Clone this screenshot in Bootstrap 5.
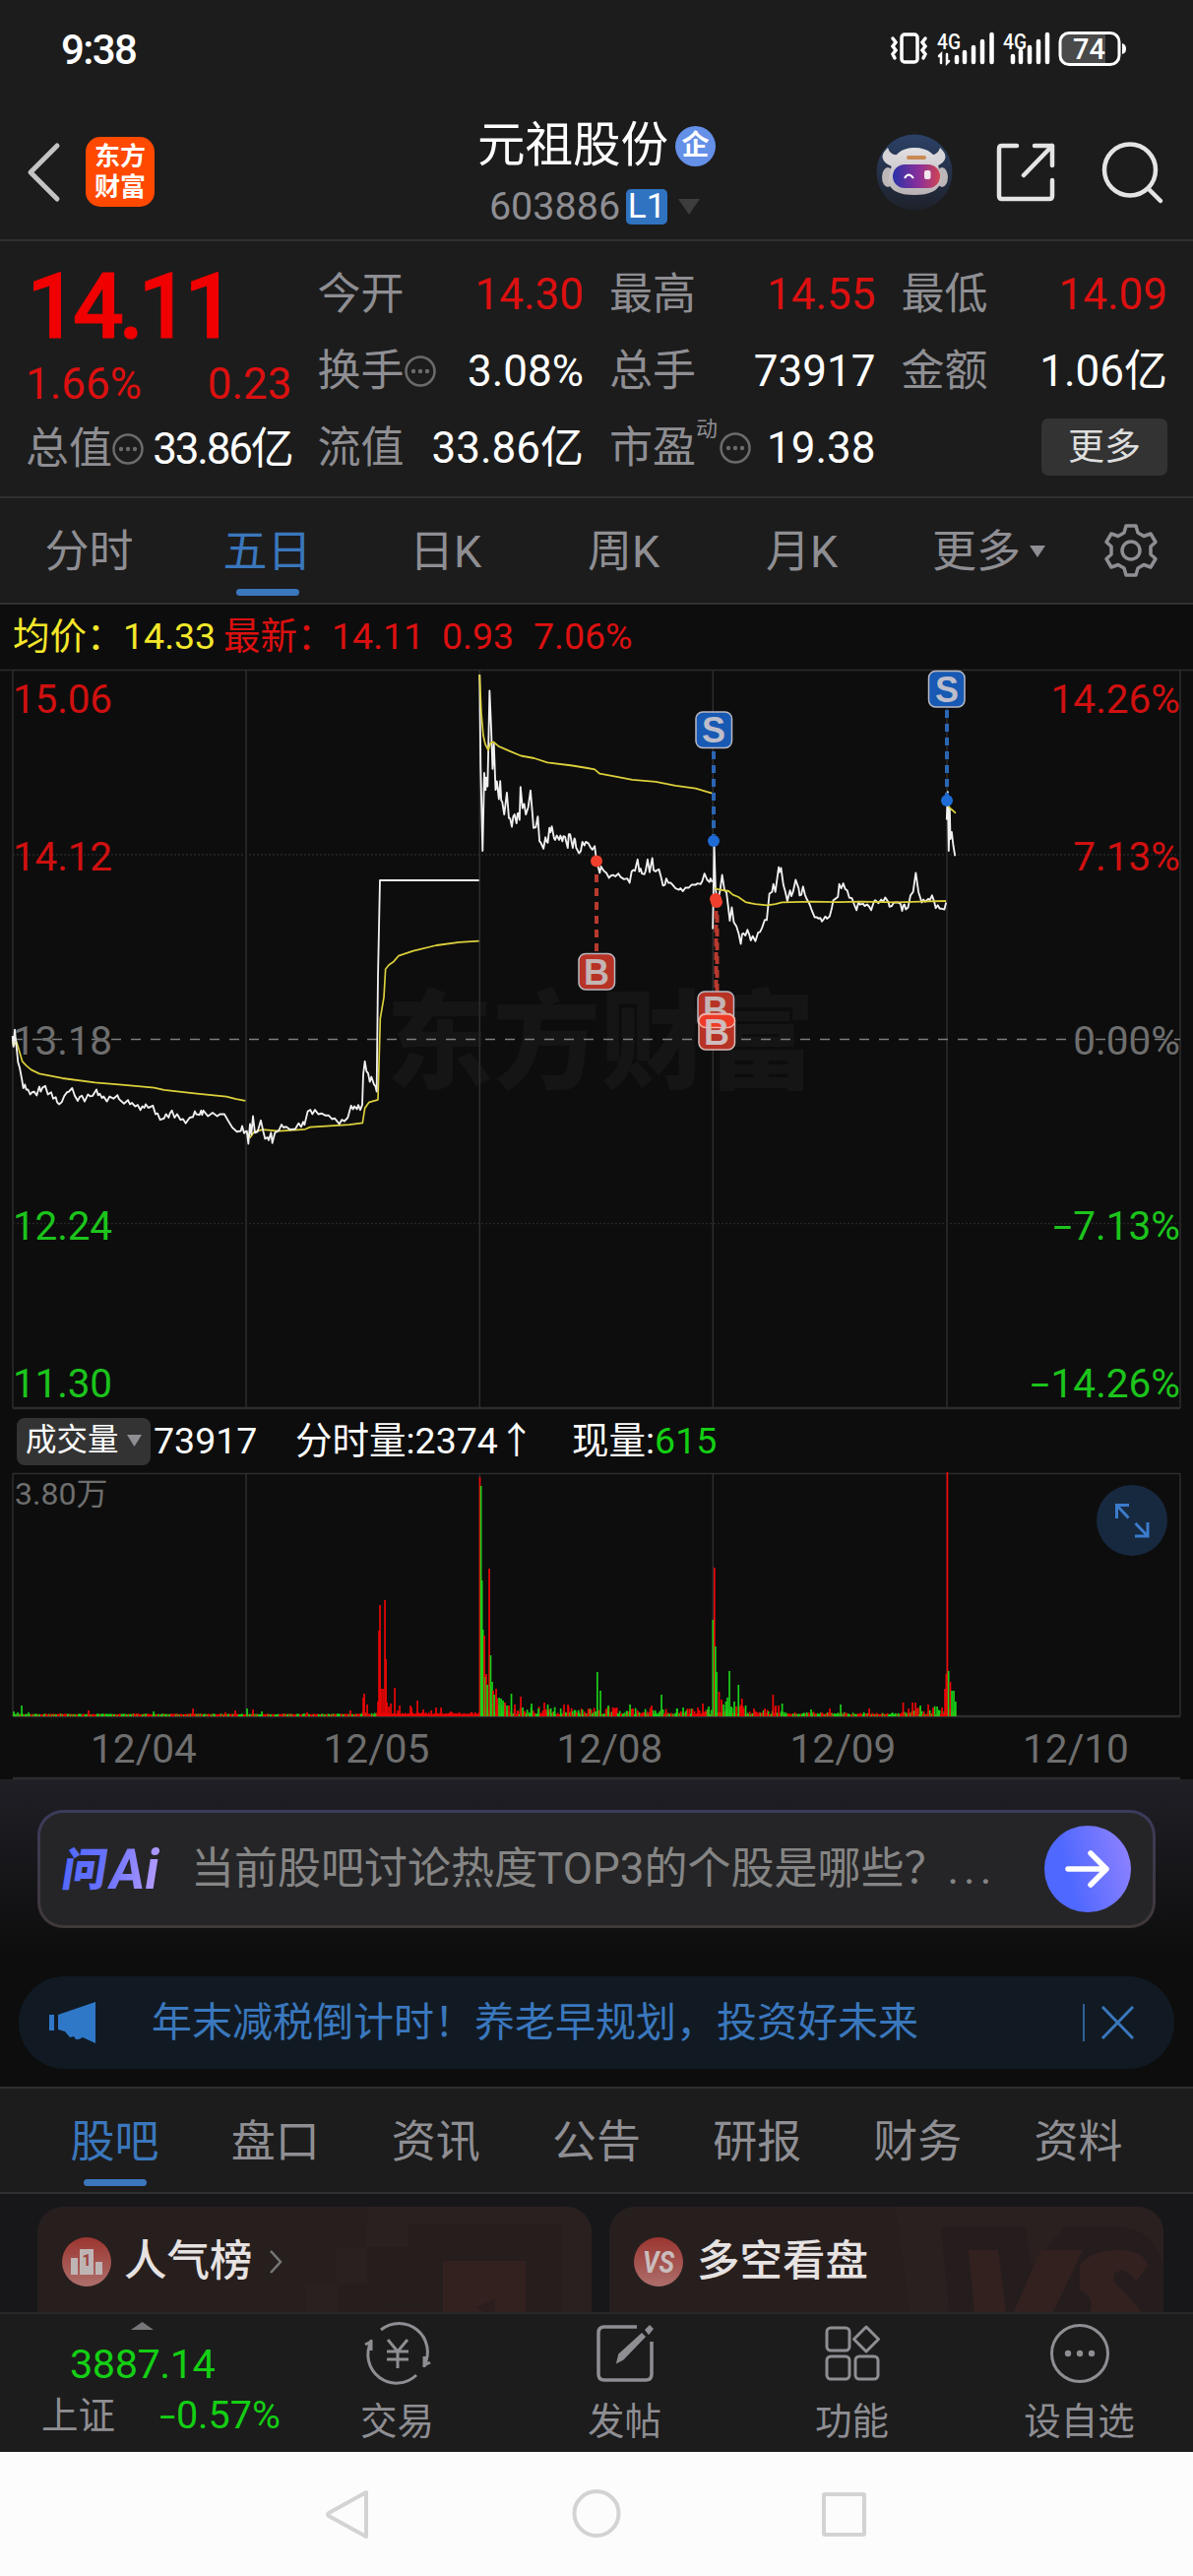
<!DOCTYPE html>
<html lang="zh-CN">
<head>
    <meta charset="UTF-8">
    <meta name="viewport" content="width=device-width, initial-scale=1">
    <title>元祖股份 603886</title>
    <!-- Bootstrap CDN -->
    <link href="https://cdn.jsdelivr.net/npm/bootstrap@5.3.0/dist/css/bootstrap.min.css" rel="stylesheet">
    <style>
        body {
            width: 1212px;
            background: #0d0d0d;
            color: #fff;
            font-family: Roboto, "Noto Sans CJK SC", sans-serif;
            line-height: 1;
            overflow-x: hidden;
        }
        svg { display: block; flex: none; overflow: visible; }
        .panel { background: #1c1c1c; }
        .line-b { border-bottom: 2px solid #303032; }
        .up { color: #dc1010; }
        .down { color: #14cf14; }
        .dim { color: #8e8e93; }
        .blue { color: #3a77bd; }

        .statusbar { height: 98px; padding: 30px 67px 0 62px; font-size: 42px; font-weight: 500; }
        .statusbar .clock { letter-spacing: -1.6px; }
        .titlebar { height: 147px; }
        .side { width: 380px; height: 153px; }
        .logo { width: 70px; height: 71px; border-radius: 15px; background: #ff4900; font-size: 26px; line-height: 31px; font-weight: 700; margin-left: 24px; }
        .stock-name { font-size: 48.5px; line-height: 62px; }
        .ent { width: 41px; height: 41px; background: #6490e8; font-size: 28px; font-weight: 700; margin-left: 7px; }
        .stock-code { font-size: 39.5px; line-height: 62px; }
        .level { width: 42px; height: 36px; border-radius: 5px; background: #2f73c1; font-size: 35px; margin-left: 6px; color: #fff; }

        .quote { height: 261px; padding: 15px 26px 0 26px; display: grid; grid-template-columns: repeat(4, 270.5px); column-gap: 26px; font-size: 44px; }
        .quote .cell { height: 78px; }
        .price { height: 103px; font-size: 92px; font-weight: 500; letter-spacing: -5.6px; color: #f00000; padding-left: 1px; -webkit-text-stroke: 1px #f00000; }
        .change { height: 54px; }
        .tight { letter-spacing: -2.2px; }
        .more-btn { width: 128px; height: 58px; border-radius: 7px; background: #333; color: #dedede; font-size: 37px; margin-bottom: 2px; }
        .sup { font-size: 22px; align-self: flex-start; margin-top: 9px; }

        .tabs { height: 108px; font-size: 45px; }
        .tabs .item { position: relative; width: 181px; height: 108px; }
        .tabs2 { height: 109px; padding: 0 35px; border-top: 2px solid #303032; }
        .tabs2 .item { width: 163.2px; }
        .item.on { color: #3a77bd; }
        .item.on::after { content: ""; position: absolute; left: 50%; bottom: 9px; width: 64px; height: 7px; margin-left: -32px; border-radius: 4px; background: #3a77bd; }

        .avg { height: 66px; font-size: 37.5px; padding-left: 13px; }
        .avg span { display: inline-block; white-space: nowrap; }
        .yellow { color: #f4e72a; }
        .volinfo { height: 64px; font-size: 37.5px; padding-left: 17px; }
        .volbtn { width: 136px; height: 48px; background: #333; border-radius: 8px; font-size: 31.5px; padding-left: 9px; padding-bottom: 2px; }
        .axis { font-size: 40.5px; }

        .ai-area { height: 182px; padding: 31px 38px 0; background: linear-gradient(#201f26, #0d0d0d); }
        .ai-box { height: 120px; border: 3px solid transparent; border-radius: 26px; background: linear-gradient(#252527, #252527) padding-box, linear-gradient(#3c3b5c, #403839) border-box; padding: 0 22px 0 21px; }
        .ai-text { font-size: 44px; color: #858585; width: 815px; margin-left: 29px; }
        .ai-go { width: 88px; height: 88px; background: linear-gradient(75deg, #4f68ff 30%, #9384ff); }
        .notice { height: 94px; margin: 18px 19px; border-radius: 47px; background: #111a23; font-size: 41px; padding: 0 40px 0 31px; }

        .cards { height: 120px; background: #17171a; padding: 13px 30px 0 38px; gap: 18px; overflow: hidden; }
        .topic { position: relative; width: 563px; height: 107px; border-radius: 26px 26px 0 0; background: #271f1e; padding-left: 25px; font-size: 43.5px; font-weight: 500; color: #e6e2e2; overflow: hidden; }
        .topic .art { position: absolute; right: 0; top: 0; }
        .topic .front { position: relative; height: 112px; }

        .bottombar { height: 142px; border-top: 2px solid #28282a; font-size: 37.5px; }
        .index { width: 288px; padding-left: 42px; }
        .minus { display: inline-block; transform: scaleX(1.5); transform-origin: left; margin-right: 6px; }
        .tool { width: 231px; padding-top: 6px; }
        .tool span { margin-top: 17px; }
        .sysnav { height: 126px; background: #fcfcfc; }
    </style>
</head>
<body>

<!-- Estado -->
<div class="panel statusbar d-flex align-items-start justify-content-between">
    <div class="clock">9:38</div>
    <svg width="240" height="40" viewBox="906 30 240 40">
        <g fill="none" stroke="#fff" stroke-width="3.5" stroke-linecap="round">
            <rect x="917" y="35" width="16" height="28" rx="3"/>
            <path d="M908 39l3 4-3 4 3 4-3 4 2 4M941 39l-3 4 3 4-3 4 3 4-2 4"/>
            <path d="M973 63v-5M981 63v-10M990 63v-15M999 63v-21M1008.500 63v-28M1030 63v-6M1038 63v-11M1047 63v-15M1056 63v-21M1065 63v-28" stroke-width="4.500"/>
            <path d="M957 64v-9l-2 2M963 55v9l2-2" stroke-width="2.500"/>
        </g>
        <g fill="#fff" font-size="22" font-weight="500">
            <text x="953" y="50" textLength="24" lengthAdjust="spacingAndGlyphs">4G</text>
            <text x="1020" y="50" textLength="24" lengthAdjust="spacingAndGlyphs">4G</text>
        </g>
        <path d="M1088 34h36v31h-36q-9 0-9-9v-13q0-9 9-9z" fill="#4a4a4a"/>
        <rect x="1078" y="33.500" width="60" height="32" rx="9" fill="none" stroke="#fff" stroke-width="3"/>
        <path d="M1141 44q4 1 4 5.500t-4 5.500z" fill="#fff"/>
        <text x="1107.500" y="60" fill="#fff" font-size="29" font-weight="500" text-anchor="middle">74</text>
    </svg>
</div>

<!-- Título -->
<div class="panel line-b titlebar d-flex justify-content-between">
    <div class="side d-flex align-items-center ps-4">
        <svg width="36" height="64" viewBox="0 0 36 64" style="margin-left: 3px"><path d="M31 5L4 32l27 27" fill="none" stroke="#c4c4c4" stroke-width="5" stroke-linecap="round" stroke-linejoin="round"/></svg>
        <div class="logo d-flex flex-column align-items-center justify-content-center"><span>东方</span><span>财富</span></div>
    </div>
    <div class="d-flex flex-column align-items-center" style="padding-top: 19px">
        <div class="stock-name d-flex align-items-center">元祖股份<span class="ent rounded-circle d-flex align-items-center justify-content-center">企</span></div>
        <div class="stock-code dim d-flex align-items-center" style="margin-right: 4px">603886<span class="level d-flex align-items-center justify-content-center">L1</span>
            <svg width="22" height="16" viewBox="0 0 22 16" style="margin-left: 11px"><path d="M0 0h22L11 16z" fill="#3d3d3d"/></svg>
        </div>
    </div>
    <div class="side d-flex align-items-center justify-content-end" style="padding-right: 31px">
        <svg width="78" height="78" viewBox="0 0 78 78">
            <defs>
                <linearGradient id="sky" x1="0" y1="0" x2="0" y2="1"><stop offset="0" stop-color="#2c4167"/><stop offset="1" stop-color="#1d212a"/></linearGradient>
                <linearGradient id="visor"><stop offset="0" stop-color="#2a32a8"/><stop offset=".55" stop-color="#8a2f9b"/><stop offset="1" stop-color="#d04552"/></linearGradient>
                <linearGradient id="helm" x1="0" y1="0" x2="0" y2="1"><stop offset="0" stop-color="#e2e0e4"/><stop offset="1" stop-color="#b9b2b4"/></linearGradient>
            </defs>
            <circle cx="39" cy="39" r="38.500" fill="url(#sky)"/>
            <path d="M12 14q-11 10 0 17l6 3 8-14q-11 4-14-6zM65 14q11 10 0 17l-6 3-8-14q11 4 14-6z" fill="#d6d4d8"/>
            <ellipse cx="12" cy="44" rx="6" ry="10" fill="#bdb7ba"/><ellipse cx="67" cy="44" rx="6" ry="10" fill="#bdb7ba"/>
            <path d="M15 36q3-22 24-22 22 0 25 22l2 12q-3 14-27 14T12 48z" fill="url(#helm)"/>
            <rect x="31" y="22" width="20" height="4" rx="2" fill="#c98a54"/>
            <rect x="17" y="31" width="48" height="24" rx="12" fill="url(#visor)"/>
            <path d="M29 45q4-7 9 0" fill="none" stroke="#fff" stroke-width="2"/>
            <rect x="49" y="37" width="6.500" height="9" rx="2" fill="#f3e6ef"/>
        </svg>
        <svg width="60" height="60" viewBox="0 0 60 60" style="margin-left: 44px" fill="none" stroke="#e4e4e4" stroke-width="4.500" stroke-linecap="round" stroke-linejoin="round">
            <path d="M21 3H6q-3 0-3 3v48q0 3 3 3h48q3 0 3-3V38M39 3h18v20M57 3L28 33"/>
        </svg>
        <svg width="62" height="62" viewBox="0 0 62 62" style="margin-left: 47px" fill="none" stroke="#e4e4e4" stroke-width="4.500" stroke-linecap="round">
            <circle cx="29" cy="28.500" r="26"/><path d="M48 48l12 12"/>
        </svg>
    </div>
</div>

<!-- Cotización -->
<div class="panel line-b quote">
    <div>
        <div class="price d-flex align-items-center">14.11</div>
        <div class="change up d-flex align-items-center justify-content-between"><span>1.66%</span><span>0.23</span></div>
        <div class="cell d-flex align-items-center"><span class="dim">总值</span>
            <svg width="32" height="32" viewBox="0 0 32 32" class="ms-0"><circle cx="16" cy="16" r="14.500" fill="none" stroke="#6b6b6e" stroke-width="2.500"/><g fill="#6b6b6e"><circle cx="9" cy="16" r="2.200"/><circle cx="16" cy="16" r="2.200"/><circle cx="23" cy="16" r="2.200"/></g></svg>
            <span class="ms-auto tight">33.86亿</span></div>
    </div>
    <div>
        <div class="cell d-flex align-items-center justify-content-between"><span class="dim">今开</span><span class="up">14.30</span></div>
        <div class="cell d-flex align-items-center"><span class="dim">换手</span>
            <svg width="32" height="32" viewBox="0 0 32 32"><circle cx="16" cy="16" r="14.500" fill="none" stroke="#6b6b6e" stroke-width="2.500"/><g fill="#6b6b6e"><circle cx="9" cy="16" r="2.200"/><circle cx="16" cy="16" r="2.200"/><circle cx="23" cy="16" r="2.200"/></g></svg>
            <span class="ms-auto">3.08%</span></div>
        <div class="cell d-flex align-items-center justify-content-between"><span class="dim">流值</span><span>33.86亿</span></div>
    </div>
    <div>
        <div class="cell d-flex align-items-center justify-content-between"><span class="dim">最高</span><span class="up">14.55</span></div>
        <div class="cell d-flex align-items-center justify-content-between"><span class="dim">总手</span><span>73917</span></div>
        <div class="cell d-flex align-items-center"><span class="dim">市盈</span><span class="sup dim">动</span>
            <svg width="32" height="32" viewBox="0 0 32 32" style="margin-left: 2px"><circle cx="16" cy="16" r="14.500" fill="none" stroke="#6b6b6e" stroke-width="2.500"/><g fill="#6b6b6e"><circle cx="9" cy="16" r="2.200"/><circle cx="16" cy="16" r="2.200"/><circle cx="23" cy="16" r="2.200"/></g></svg>
            <span class="ms-auto">19.38</span></div>
    </div>
    <div>
        <div class="cell d-flex align-items-center justify-content-between"><span class="dim">最低</span><span class="up">14.09</span></div>
        <div class="cell d-flex align-items-center justify-content-between"><span class="dim">金额</span><span>1.06亿</span></div>
        <div class="cell d-flex align-items-center justify-content-end"><div class="more-btn d-flex align-items-center justify-content-center">更多</div></div>
    </div>
</div>

<!-- Periodos -->
<div class="panel line-b tabs dim d-flex">
    <div class="item d-flex align-items-center justify-content-center">分时</div>
    <div class="item on d-flex align-items-center justify-content-center">五日</div>
    <div class="item d-flex align-items-center justify-content-center">日K</div>
    <div class="item d-flex align-items-center justify-content-center">周K</div>
    <div class="item d-flex align-items-center justify-content-center">月K</div>
    <div class="item d-flex align-items-center justify-content-center" style="padding-left: 18px">更多
        <svg width="16" height="12" viewBox="0 0 16 12" style="margin-left: 9px"><path d="M0 0h16L8 12z" fill="#8e8e93"/></svg>
    </div>
    <div class="d-flex align-items-center" style="padding-left: 35px">
        <svg width="56" height="56" viewBox="-28 -28 56 56" fill="none" stroke="#8e8e93" stroke-width="3.500" stroke-linejoin="round">
            <path d="M-5 -25H5L7 -18L13 -14.500L20 -17L25 -8.500L20 -4V4L25 8.500L20 17L13 14.500L7 18L5 25H-5L-7 18L-13 14.500L-20 17L-25 8.500L-20 4V-4L-25 -8.500L-20 -17L-13 -14.500L-7 -18Z"/>
            <circle r="9"/>
        </svg>
    </div>
</div>

<!-- Media y último -->
<div class="avg up d-flex align-items-center">
    <span class="yellow" style="width: 112px">均价：</span><span class="yellow" style="width: 102px">14.33</span>
    <span style="width: 110px">最新：</span><span style="width: 112px">14.11</span><span style="width: 93px">0.93</span><span>7.06%</span>
</div>

<!-- Gráfico de precio -->
<svg width="1212" height="752" viewBox="0 680 1212 752" class="axis">
    <text x="392" y="1097" font-size="109" font-weight="900" fill="#151515" textLength="436" lengthAdjust="spacingAndGlyphs">东方财富</text>
    <g stroke="#2d2d2e" stroke-width="1.500" fill="none">
        <path d="M0 680.500H1212M13 680V1430M250 680V1430M487.300 680V1430M724.300 680V1430M962 680V1430M1199 680V1430"/>
        <path d="M13 868H1199M13 1242.500H1199" stroke-dasharray="2 2" stroke="#262626"/>
        <path d="M13 1430H1199" stroke-width="2.500"/>
    </g>
    <path d="M13 1055.500H1199" stroke="#7d7d7d" stroke-width="1.600" stroke-dasharray="10 10"/>
    <g fill="#d01010">
        <text x="13" y="724" textLength="101">15.06</text><text x="13" y="884" textLength="101">14.12</text>
        <text x="1199" y="724" text-anchor="end">14.26%</text><text x="1199" y="884" text-anchor="end">7.13%</text>
    </g>
    <g fill="#6e6e6e">
        <text x="13" y="1071" textLength="101">13.18</text><text x="1199" y="1071" text-anchor="end">0.00%</text>
    </g>
    <g fill="#1cc41c">
        <text x="13" y="1259" textLength="101">12.24</text><text x="13" y="1419" textLength="101">11.30</text>
        <text x="1070" y="1259" textLength="19" lengthAdjust="spacingAndGlyphs">-</text><text x="1199" y="1259" text-anchor="end">7.13%</text>
        <text x="1047" y="1419" textLength="19" lengthAdjust="spacingAndGlyphs">-</text><text x="1199" y="1419" text-anchor="end">14.26%</text>
    </g>
    <!-- días 1 y 2 -->
    <g transform="translate(0 670) scale(.33333 .35714)" fill="none" stroke-linejoin="round">
        <g stroke="#dcd03c" stroke-width="5">
            <polyline points="38,1080 41,1098 50,1085 58,1110 68,1142 80,1154 95,1166 120,1177 190,1190 290,1202 380,1209 470,1217 500,1223 600,1234 690,1242 720,1249 748,1254"/>
            <polyline points="752,1345 758,1352 763,1358 775,1342 800,1336 850,1340 930,1335 945,1329 1065,1322 1105,1317 1112,1275 1125,1258 1152,1251 1159,1020 1170,960 1175,880 1185,868 1200,858 1215,842 1260,828 1330,812 1400,803 1460,800"/>
        </g>
        <g stroke="#f0f0f0" stroke-width="5.500">
            <polyline points="38,1070 41,1100 45,1052 50,1100 55,1145 60,1160 67,1195 71,1218 76,1208 80,1222 85,1222 92,1236 98,1230 104,1228 112,1239 117,1222 120,1214 124,1228 130,1216 138,1212 146,1236 156,1230 162,1248 170,1244 174,1258 180,1264 188,1258 196,1240 204,1230 210,1228 220,1218 228,1240 237,1254 244,1242 250,1240 258,1256 268,1236 275,1241 282,1240 294,1222 299,1238 304,1234 311,1246 316,1242 326,1256 334,1242 346,1248 358,1238 362,1248 368,1254 378,1262 390,1252 396,1264 402,1260 412,1270 420,1266 428,1280 434,1270 440,1274 444,1264 452,1274 466,1268 474,1292 480,1290 488,1308 500,1304 506,1292 514,1302 518,1290 524,1282 532,1302 540,1292 550,1308 558,1306 566,1318 578,1302 588,1300 594,1284 598,1292 608,1294 613,1282 616,1294 620,1282 634,1298 648,1288 662,1298 670,1292 684,1292 696,1312 708,1330 722,1342 734,1340 738,1326 744,1346 750,1340"/>
            <polyline points="752,1338 757,1376 762,1320 766,1350 771,1298 777,1345 785,1342 795,1310 802,1340 808,1362 815,1358 819,1366 826,1345 830,1374 838,1345 850,1338 858,1322 864,1330 872,1328 884,1336 900,1334 910,1318 918,1328 924,1314 928,1322 938,1284 946,1280 952,1292 960,1280 970,1292 980,1290 992,1296 1002,1296 1012,1306 1020,1304 1034,1320 1042,1308 1050,1312 1060,1302 1070,1268 1076,1278 1080,1270 1088,1278 1092,1266 1098,1280 1104,1266 1107,1180 1112,1142 1117,1170 1122,1176 1127,1200 1132,1186 1140,1208 1144,1212 1148,1228 1152,900 1158,627 1460,627"/>
        </g>
    </g>
    <!-- días 3, 4 y 5 -->
    <g transform="translate(470 670) scale(.33801 .35714)" fill="none" stroke-linejoin="round">
        <g stroke="#f0f0f0" stroke-width="5.500">
            <polyline points="51,42 54,300 60,543 65,322 69,370 71,335 75,360 81,88 86,200 90,310 94,240 99,370 103,346 109,396 113,345 116,400 119,404 125,440 133,378 139,450 143,452 148,475 152,446 156,440 162,465 165,438 168,436 171,455 174,362 180,422 185,410 190,440 197,420 204,372 210,440 213,478 220,476 226,446 231,516 235,520 243,537 249,505 252,516 256,520 261,478 264,490 268,474 275,508 278,512 283,500 290,512 294,500 300,516 303,502 308,504 313,524 316,535 319,496 323,496 331,535 336,508 338,512 341,534 350,550 355,544 360,518 366,528 370,518 378,522 386,536 390,540 397,530 402,570 412,606 416,588 424,600 432,606 440,620 446,614 452,612 459,616 468,608 475,618 485,624 495,622 502,634 508,602 513,598 518,600 526,568 531,602 535,594 539,608 546,610 550,600 556,568 562,604 570,564 574,598 580,602 585,598 590,596 597,620 602,642 608,640 612,622 618,634 625,634 633,642 640,650 650,654 655,650 662,658 670,648 680,648 688,640 700,640 706,636 715,638 720,630 727,608 735,626 742,632 745,622 750,632"/>
            <polyline points="752,766 754,660 756,522 760,650 766,690 774,655 780,612 787,655 793,662 798,700 803,742 809,704 815,746 823,758 830,780 836,808 840,780 844,778 850,784 856,768 861,780 866,798 872,786 880,800 888,776 894,774 900,762 908,740 914,740 922,665 930,660 934,638 940,660 950,590 952,604 957,592 964,640 970,660 976,686 984,656 988,672 993,660 1001,626 1010,650 1013,670 1018,668 1023,645 1029,668 1034,680 1040,690 1044,698 1050,714 1058,732 1064,732 1070,736 1075,734 1080,744 1085,738 1090,730 1095,736 1103,730 1110,704 1114,684 1120,680 1128,674 1132,638 1138,650 1144,636 1150,652 1156,656 1162,676 1170,678 1177,696 1184,712 1190,688 1194,696 1204,694 1208,700 1216,696 1222,702 1228,712 1236,688 1240,684 1250,692 1258,682 1264,688 1270,676 1280,690 1283,702 1290,700 1296,690 1308,690 1316,694 1321,714 1325,698 1328,696 1332,710 1339,704 1346,670 1354,660 1362,606 1370,660 1380,690 1385,682 1390,688 1400,680 1404,684 1411,670 1418,690 1422,706 1428,698 1434,708 1440,708 1448,710 1453,690"/>
            <polyline points="1455,455 1458,376 1461,543 1464,425 1466,510 1470,490 1475,530 1480,558"/>
        </g>
        <g stroke="#dcd03c" stroke-width="5">
            <polyline points="51,42 56,150 62,215 68,240 77,257 84,236 93,234 108,246 142,260 175,273 215,280 255,292 330,301 375,308 397,312 412,324 460,332 510,341 580,347 640,358 700,366 750,380"/>
            <polyline points="758,648 764,652 800,658 812,668 828,674 850,689 880,695 915,698 940,695 960,690 1050,688 1130,689 1200,688 1300,690 1400,687 1453,686"/>
            <polyline points="1460,416 1467,424 1475,430 1482,436"/>
        </g>
    </g>
    <!-- marcas de compra y venta -->
    <g stroke-width="4" stroke-dasharray="8 6" fill="none">
        <path d="M725 763V848M962 721V808" stroke="#2a66b4"/>
        <path d="M606 888V967M727.500 925V1006M728.500 929V1018" stroke="#b83a2e"/>
    </g>
    <g fill="#1e6bd6"><circle cx="725" cy="854" r="6"/><circle cx="962" cy="813" r="6"/></g>
    <g fill="#f0402d"><circle cx="606" cy="874.500" r="6"/><circle cx="727" cy="913" r="6"/><circle cx="728" cy="916" r="6"/></g>
    <g stroke="#b9b9c4" stroke-width="1.500">
        <rect x="707" y="723" width="36.500" height="36.500" rx="7" fill="#1759b3"/>
        <rect x="943.500" y="681.500" width="36.500" height="36.500" rx="7" fill="#1759b3"/>
        <rect x="588" y="968.500" width="36.500" height="36.500" rx="7" fill="#b73326"/>
        <rect x="709" y="1007" width="36.500" height="36.500" rx="7" fill="#b73326"/>
    </g>
    <g font-family="Liberation Sans, sans-serif" font-size="36" font-weight="700" text-anchor="middle" fill="#bdbdcb">
        <text x="725" y="754">S</text><text x="962" y="712.500">S</text>
        <text x="606" y="1000" fill="#c4b4b4">B</text><text x="727" y="1038" fill="#c4b4b4">B</text>
        <rect x="710" y="1029.500" width="36.500" height="36.500" rx="7" fill="#b73326" stroke="#d8b9b5" stroke-width="1.500"/>
        <rect x="710" y="1030" width="36.500" height="13.500" rx="7" fill="#ee3a26" stroke="#f0b0a8" stroke-width="1.500"/>
        <text x="728" y="1061" fill="#d0bcbc">B</text>
    </g>
</svg>

<!-- Volumen -->
<div class="volinfo d-flex align-items-center">
    <div class="volbtn d-flex align-items-center">成交量<svg width="15" height="12" viewBox="0 0 15 12" style="margin-left: 8px"><path d="M0 0h15L7.500 12z" fill="#8e8e93"/></svg></div>
    <span style="width: 147px; padding-left: 3px">73917</span>
    <span style="width: 281px">分时量:2374↑</span>
    <span>现量:<span class="down">615</span></span>
</div>
<svg width="1212" height="311" viewBox="0 1496 1212 311" class="axis">
    <g stroke="#2d2d2e" stroke-width="1.500" fill="none">
        <path d="M13 1496.500H1199M13 1496V1743M250 1496V1743M487.300 1496V1743M724.300 1496V1743M962 1496V1743M1199 1496V1743"/>
        <path d="M13 1743H1199M13 1806H1199" stroke-width="2.500"/>
    </g>
    <g id="bars"></g>
    <text x="15" y="1528" font-size="32" fill="#6e6e6e">3.80万</text>
    <g fill="#6e6e6e" text-anchor="middle">
        <text x="146" y="1790">12/04</text><text x="382.500" y="1790">12/05</text><text x="619.500" y="1790">12/08</text><text x="856.500" y="1790">12/09</text><text x="1093" y="1790">12/10</text>
    </g>
    <circle cx="1150" cy="1544" r="36" fill="#17293f"/>
    <path d="M1134.500 1542V1528.500H1147M1134.500 1528.500L1146.500 1541.500M1166 1546V1560H1153M1166 1560L1153.500 1547" fill="none" stroke="#3a7ccb" stroke-width="3"/>
</svg>

<!-- Pregunta a la IA -->
<div class="ai-area">
    <div class="ai-box d-flex align-items-center">
        <svg width="103" height="60" viewBox="0 -5 103 60">
            <defs><linearGradient id="wen" gradientUnits="userSpaceOnUse" x1="0" y1="0" x2="103" y2="0"><stop offset="0" stop-color="#4f68ff"/><stop offset=".5" stop-color="#6a72ff"/><stop offset="1" stop-color="#b39bff"/></linearGradient></defs>
            <g transform="skewX(-9)" fill="url(#wen)" font-weight="900">
                <text x="6" y="42" font-size="46" textLength="45" lengthAdjust="spacingAndGlyphs">问</text>
                <text x="54" y="45" font-size="57" font-weight="700" textLength="50" lengthAdjust="spacingAndGlyphs">Ai</text>
            </g>
        </svg>
        <div class="ai-text text-nowrap">当前股吧讨论热度TOP3的个股是哪些？<span style="letter-spacing: 5px">...</span></div>
        <div class="ai-go rounded-circle d-flex align-items-center justify-content-center ms-auto">
            <svg width="46" height="40" viewBox="0 0 46 40"><path d="M3 20H42M26 4L42 20L26 36" fill="none" stroke="#fff" stroke-width="5.500" stroke-linecap="round" stroke-linejoin="round"/></svg>
        </div>
    </div>
</div>

<!-- Aviso -->
<div class="notice blue d-flex align-items-center">
    <svg width="48" height="42" viewBox="0 0 48 42" fill="#2f78c8"><path d="M0 13h5v16H0zM9 13L47 0v42L34 36l-4 2h-3l-2-3-4 1-5-6-7-2z"/></svg>
    <span style="margin-left: 56px">年末减税倒计时！养老早规划，投资好未来</span>
    <svg width="53" height="40" viewBox="0 0 53 40" class="ms-auto" fill="none" stroke="#3a77bd"><path d="M1 1v38" stroke-width="1.500"/><path d="M20 4l31 32M51 4L20 36" stroke-width="3"/></svg>
</div>

<!-- Secciones -->
<div class="panel line-b tabs tabs2 dim d-flex">
    <div class="item on d-flex align-items-center justify-content-center">股吧</div>
    <div class="item d-flex align-items-center justify-content-center">盘口</div>
    <div class="item d-flex align-items-center justify-content-center">资讯</div>
    <div class="item d-flex align-items-center justify-content-center">公告</div>
    <div class="item d-flex align-items-center justify-content-center">研报</div>
    <div class="item d-flex align-items-center justify-content-center">财务</div>
    <div class="item d-flex align-items-center justify-content-center">资料</div>
</div>

<!-- Tarjetas -->
<div class="cards d-flex">
    <div class="topic">
        <svg class="art" width="290" height="107" viewBox="0 0 290 107"><path d="M63 0H290V107H0V78H31V41H60z" fill="#2a201f"/><path d="M104 17H260V107H32V78H62V41H104z" fill="#261d1d"/><path d="M139 55H223V107H139z" fill="#332120"/><path d="M80 105h40v2H80zM172 102l20-8v13h-12z" fill="#2a1d1d"/></svg>
        <div class="front d-flex align-items-center">
            <svg width="50" height="50" viewBox="0 0 50 50"><defs><linearGradient id="rd" x1="0" y1="0" x2="0" y2="1"><stop offset="0" stop-color="#9c3530"/><stop offset="1" stop-color="#ad6f6b"/></linearGradient></defs><circle cx="25" cy="25" r="25" fill="url(#rd)"/><path d="M9 21h7v17H9zM18 12h14v26H18zM34 25h7v13h-7z" fill="#bfb4b4"/><text x="25" y="29" font-size="16" font-weight="700" text-anchor="middle" fill="#9c4540">1</text></svg>
            <span style="margin-left: 13px">人气榜</span>
            <svg width="15" height="26" viewBox="0 0 15 26" style="margin-left: 16px"><path d="M2 2l10 11L2 24" fill="none" stroke="#777" stroke-width="2.500"/></svg>
        </div>
    </div>
    <div class="topic">
        <svg class="art" width="290" height="107" viewBox="0 0 290 107"><path d="M18 0H290V107H32z" fill="#2a201f"/><path d="M64 20H150L156 60L190 20H240Q280 20 290 60V107H72z" fill="#251d1d"/><path d="M92 44H122L130 107H98zM165 44H208L178 107H138zM205 60Q215 44 245 44Q270 44 274 60L262 76Q250 58 240 68Q236 76 250 86L268 107H215Q222 92 205 85z" fill="#332120"/></svg>
        <div class="front d-flex align-items-center">
            <svg width="50" height="50" viewBox="0 0 50 50"><circle cx="25" cy="25" r="25" fill="url(#rd)"/><text x="25" y="36" font-size="31" font-weight="700" font-style="italic" text-anchor="middle" fill="#c9bdbd" textLength="32" lengthAdjust="spacingAndGlyphs">VS</text></svg>
            <span style="margin-left: 14px">多空看盘</span>
        </div>
    </div>
</div>

<!-- Barra inferior -->
<div class="panel bottombar dim d-flex">
    <div class="index">
        <svg width="23" height="8" viewBox="0 0 23 8" style="margin: 8px 0 0 91px"><path d="M11.500 0L23 8H0z" fill="#77777b"/></svg>
        <div class="down" style="font-size: 41.500px; line-height: 42px; margin: 14px 0 0 29px; letter-spacing: -.5px">3887.14</div>
        <div class="d-flex" style="line-height: 40px; margin-top: 11px"><span style="width: 120px">上证</span><span class="down" style="font-size: 39.500px"><span class="minus">-</span>0.57%</span></div>
    </div>
    <div class="tool d-flex flex-column align-items-center">
        <svg width="70" height="68" viewBox="-35 -34 70 68" fill="none" stroke="#8e8e93" stroke-width="3">
            <path d="M-17 -24A29 29 0 0 1 27 12M27 12L33 9M27 14V3M19 22A29 29 0 0 1 -27 -12M-27 -12L-33 -9M-27 -14V-3"/>
            <path d="M-10 -14L0 -2L10 -14M0 -2V15M-11 -2H11M-11 6H11"/>
        </svg>
        <span>交易</span>
    </div>
    <div class="tool d-flex flex-column align-items-center">
        <svg width="70" height="68" viewBox="-35 -34 70 68" fill="none" stroke="#8e8e93" stroke-width="3.500">
            <path d="M12 -27H-21Q-27 -27 -27 -21V21Q-27 27 -21 27H21Q27 27 27 21V-12"/><path d="M-8 9L-6 1L17 -20L20 -17L-2 6zM21 -24L25 -28L28 -25L24 -20z" fill="#8e8e93" stroke-width="1.500"/>
        </svg>
        <span>发帖</span>
    </div>
    <div class="tool d-flex flex-column align-items-center">
        <svg width="70" height="68" viewBox="-35 -34 70 68" fill="none" stroke="#8e8e93" stroke-width="3">
            <rect x="-26" y="-26" width="23" height="23" rx="4"/><rect x="-26" y="3" width="23" height="23" rx="4"/><rect x="3" y="3" width="23" height="23" rx="4"/><path d="M14 -27L26.500 -14.500L14 -2L1.500 -14.500z" stroke-linejoin="round"/>
        </svg>
        <span>功能</span>
    </div>
    <div class="tool d-flex flex-column align-items-center">
        <svg width="70" height="68" viewBox="-35 -34 70 68"><circle r="28.500" fill="none" stroke="#8e8e93" stroke-width="3"/><g fill="#8e8e93"><circle cx="-12" r="3.200"/><circle r="3.200"/><circle cx="12" r="3.200"/></g></svg>
        <span>设自选</span>
    </div>
</div>

<!-- Botones del sistema -->
<div class="sysnav">
    <svg width="1212" height="126" viewBox="0 2490 1212 126" fill="none" stroke="#d3d3d3" stroke-width="4" stroke-linejoin="round">
        <path d="M372 2531V2576L334 2555Q332 2553.500 334 2552z"/><circle cx="606" cy="2552.500" r="22.500"/><rect x="837" y="2533" width="41" height="41" rx="1"/>
    </svg>
</div>

<script src="https://cdn.jsdelivr.net/npm/bootstrap@5.3.0/dist/js/bootstrap.bundle.min.js"></script>
<script>
    const R = '#ee0606', G = '#19d019';
    // [x, alto, color]
    const picos = [
        [14,5,G],[18,4,G],[22,11,G],[29,4,G],[90,6,R],[156,5,G],[196,8,R],[229,4,R],[239,6,R],[251,8,G],[257,7,R],[266,5,G],[312,4,R],[356,6,R],
        [369,19,R],[370,23,R],[373,12,R],[384,15,R],[385,87,R],[386,113,R],[387,28,R],[389,28,R],[391,118,R],[392,58,R],[393,14,R],[395,10,R],[397,13,R],[401,29,R],[404,6,R],[406,11,R],[417,11,R],[418,9,R],[424,16,R],[430,7,R],[438,6,R],[443,9,R],[448,9,R],[458,5,R],
        [487.5,243,R],[488.6,234,G],[489.6,138,G],[490.6,88,G],[492,82,R],[493,40,G],[494,43,R],[495,32,G],[497,150,R],[498.4,62,G],[500,35,G],[501,26,R],[502,22,G],[504,28,R],[505,18,R],[507,19,G],[509,18,G],[511,16,G],[513,14,R],[515,11,G],[517,11,R],[519.5,23,G],[523,12,R],[529,20,R],[531,9,G],[540,13,G],[547,8,G],[553,14,R],[556.5,12,G],[573,12,R],[577,12,R],
        [606.8,45,G],[610,26,G],[618,11,G],[640,12,G],[643,8,R],[662,11,R],[672,22,G],[688,8,G],[694,9,G],[709,9,R],[714,13,R],[720,10,G],
        [724.3,98,G],[725.8,151,R],[726.8,71,G],[728,45,G],[730.5,25,R],[733,17,R],[735,12,G],[737.5,15,G],[739,19,G],[741,46,G],[743,10,G],[746,15,G],[748,10,R],[750.2,32,G],[753.7,18,R],[757.5,11,G],[766,8,R],[777,8,R],[785.3,22,R],[788,11,R],[791,11,R],[794.6,13,G],[824,7,G],[843,8,R],[854,12,G],[883,8,R],
        [917.5,14,R],[923,8,R],[927,14,R],[930,14,R],[932,8,R],[935,11,G],[943,12,R],[948,9,R],[952,10,G],[957,9,R],[960,28,R],[961.3,43,R],[962.4,248,R],[963.6,46,G],[965.4,35,R],[967,26,G],[969,26,G],[970.8,15,G]
    ];
    let seed = 7;
    const rnd = () => (seed = seed * 16807 % 2147483647) / 2147483647;
    const base = x => x < 365 ? 1 : x < 487 ? 3 : x < 530 ? 12 : x < 724 ? 9 : x < 765 ? 11 : x < 800 ? 8 : x < 920 ? 3 : 9;
    let out = '';
    const bar = (x, h, c) => out += `<rect x="${x - .8}" y="${1743 - h}" width="1.7" height="${h}" fill="${c}"/>`;
    for (let x = 13.6; x < 971; x += 1) {
        const r = rnd();
        bar(x, 2 + base(x) * r * rnd(), x > 384 && x < 487 ? R : (rnd() < .52 ? R : G));
    }
    picos.forEach(p => bar(...p));
    document.getElementById('bars').innerHTML = out;
</script>
</body>
</html>
